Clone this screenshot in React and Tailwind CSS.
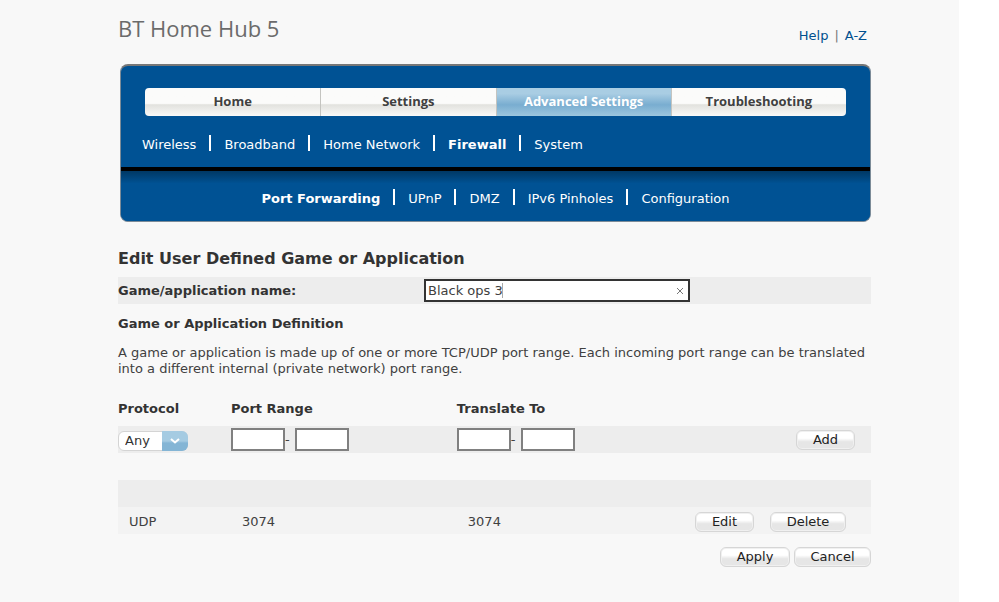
import React from 'react';

const tabs = [
  { label: 'Home' },
  { label: 'Settings' },
  { label: 'Advanced Settings', active: true },
  { label: 'Troubleshooting' },
];

const sections = ['Wireless', 'Broadband', 'Home Network', 'Firewall', 'System'];
const pages = ['Port Forwarding', 'UPnP', 'DMZ', 'IPv6 Pinholes', 'Configuration'];

function MenuLinks({ items, current, label, className }) {
  return (
    <nav aria-label={label} className={className}>
      <ul className="flex items-center">
        {items.map((item, i) => (
          <li key={item} className="flex items-center">
            {i > 0 && <span className="mx-[13px] mb-1 h-4 w-0.5 bg-white" />}
            <a href="#" className={item === current ? 'font-bold' : ''}>
              {item}
            </a>
          </li>
        ))}
      </ul>
    </nav>
  );
}

function PillButton({ children, className }) {
  return (
    <button
      type="button"
      className={`h-5 rounded-md border border-[#d6d6d6] bg-linear-to-b from-white from-40% to-[#e6e6e6] to-60% leading-4 text-[#222] shadow-[inset_0_0_0_1px_#f0f0f0] ${className}`}
    >
      {children}
    </button>
  );
}

function PortPair({ name }) {
  const box = 'h-[23px] w-[54px] border-2 border-[#808080] bg-white px-1 outline-none';
  return (
    <div className="flex items-center">
      <input type="text" aria-label={`${name} start`} className={box} />
      <span className="w-[10px]">-</span>
      <input type="text" aria-label={`${name} end`} className={box} />
    </div>
  );
}

export default function App() {
  return (
    <div className="min-h-screen bg-white pr-10 font-['Verdana','DejaVu_Sans',sans-serif] text-[13px] leading-4 text-[#404040]">
      <div className="min-h-screen bg-[#f8f8f8] pr-[88px] pl-[118px]">
        <header className="flex h-16 items-start justify-between">
          <div className="pt-3 font-['Open_Sans',sans-serif] text-[22px] leading-8 text-[#6b6b6b]">BT Home Hub 5</div>
          <div className="flex gap-1.5 pt-7 pr-1 text-[#00508f]">
            <a href="#">Help</a>
            <span className="text-[#777]">|</span>
            <a href="#">A-Z</a>
          </div>
        </header>

        <div className="ml-0.5 overflow-hidden rounded-lg border border-[#7c8b98] border-t-2 border-t-[#777] bg-[#005294] text-white">
          <div className="px-6 pt-[22px]">
            <nav aria-label="Main" className="grid h-7 grid-cols-4 overflow-hidden rounded font-['Open_Sans',sans-serif] text-[13px] font-bold">
              {tabs.map((t) => (
                <a
                  key={t.label}
                  href="#"
                  className={
                    t.active
                      ? 'flex items-center justify-center border-l border-[#c4c4c0] bg-linear-to-b from-[#a9cde3] from-20% via-[#79add0] via-60% to-[#9cc6de] pb-0.5 text-white'
                      : 'flex items-center justify-center border-l border-[#c4c4c0] bg-linear-to-b from-[#fbfbfa] from-55% via-[#e2e2de] via-60% to-[#f9f9f8] pb-0.5 text-[#404040] first:border-l-0'
                  }
                >
                  {t.label}
                </a>
              ))}
            </nav>
          </div>
          <MenuLinks items={sections} current="Firewall" label="Sections" className="flex h-[51px] items-center px-[21px] pt-1.5" />
          <div className="h-1 bg-black" />
          <div className="bg-linear-to-b from-[#003864] to-[#005294] to-25%">
            <MenuLinks items={pages} current="Port Forwarding" label="Pages" className="flex h-[50px] items-center justify-center pt-1.5" />
          </div>
        </div>

        <main className="pt-[27px]">
          <form onSubmit={(e) => e.preventDefault()}>
            <h1 className="text-base leading-5 font-bold text-[#333]">Edit User Defined Game or Application</h1>

            <div className="mt-2 flex h-[27px] items-center bg-[#ededed]">
              <label htmlFor="game" className="w-[306px] font-bold text-[#333]">
                Game/application name:
              </label>
              <div className="relative w-[266px]">
                <input
                  id="game"
                  type="text"
                  defaultValue="Black ops 3"
                  className="block h-[23px] w-full border-2 border-[#333] bg-white pr-6 pl-0.5 text-[#404040] outline-none"
                />
                <span className="absolute top-1 left-[78px] h-[15px] w-px bg-[#aaa]" />
                <button type="button" aria-label="Clear" className="absolute inset-y-0 right-1.5 flex items-center">
                  <svg width="8" height="8" viewBox="0 0 8 8" stroke="#777" strokeWidth="1" fill="none">
                    <path d="M1 1l6 6M7 1l-6 6" />
                  </svg>
                </button>
              </div>
            </div>

            <h2 className="mt-3 font-bold text-[#333]">Game or Application Definition</h2>
            <p className="mt-[13px]">
              A game or application is made up of one or more TCP/UDP port range. Each incoming port range can be
              translated into a different internal (private network) port range.
            </p>

            <table className="mt-[22px] w-full table-fixed border-collapse text-left">
              <colgroup>
                <col className="w-[15%]" />
                <col className="w-[30%]" />
                <col className="w-[55%]" />
              </colgroup>
              <thead className="text-[#333]">
                <tr className="h-[27px]">
                  <th className="pb-2 font-bold">Protocol</th>
                  <th className="pb-2 font-bold">Port Range</th>
                  <th className="pb-2 font-bold">Translate To</th>
                </tr>
              </thead>
              <tbody>
                <tr className="h-[27px] bg-[#ededed]">
                  <td>
                    <div className="relative mt-0.5 w-[70px]">
                      <select
                        aria-label="Protocol"
                        defaultValue="Any"
                        className="block h-5 w-full appearance-none rounded-md border border-[#d4d4d4] bg-white pl-1.5 leading-4 text-[#333]"
                      >
                        <option>Any</option>
                        <option>TCP</option>
                        <option>UDP</option>
                      </select>
                      <span className="pointer-events-none absolute inset-y-0 right-0 flex w-[26px] items-center justify-center rounded-r-md bg-linear-to-b from-[#a5cbe2] from-50% to-[#84b5d5] to-60%">
                        <svg width="10" height="6" viewBox="0 0 10 6" fill="none" stroke="#fff" strokeWidth="2">
                          <path d="M1 1l4 3.5L9 1" />
                        </svg>
                      </span>
                    </div>
                  </td>
                  <td><PortPair name="Port range" /></td>
                  <td>
                    <div className="flex items-center justify-between pr-4">
                      <PortPair name="Translate to" />
                      <PillButton className="w-[59px]">Add</PillButton>
                    </div>
                  </td>
                </tr>
                <tr className="h-[27px]"><td colSpan={3} /></tr>
                <tr className="h-[27px] bg-[#ededed]"><td colSpan={3} /></tr>
                <tr className="h-[27px] bg-[#f3f3f3]">
                  <td className="pt-0.5 pl-[11px]">UDP</td>
                  <td className="pt-0.5 pl-[11px]">3074</td>
                  <td className="pt-0.5 pl-[11px]">
                    <div className="flex items-center justify-between pr-[25px]">
                      <span>3074</span>
                      <span className="flex gap-4">
                        <PillButton className="w-[59px]">Edit</PillButton>
                        <PillButton className="w-[76px]">Delete</PillButton>
                      </span>
                    </div>
                  </td>
                </tr>
              </tbody>
            </table>

            <div className="mt-[13px] flex justify-end gap-1">
              <PillButton className="w-[70px]">Apply</PillButton>
              <PillButton className="w-[77px]">Cancel</PillButton>
            </div>
          </form>
        </main>
      </div>
    </div>
  );
}
